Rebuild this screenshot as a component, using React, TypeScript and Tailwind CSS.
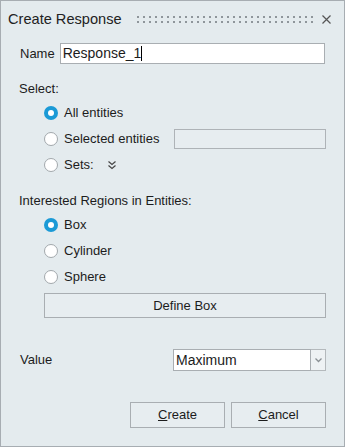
import React from "react";

function Radio({ checked, label }: { checked?: boolean; label: string }) {
  return (
    <div className="flex items-center h-[26px] pl-[43px]">
      {checked ? (
        <span className="w-[14px] h-[14px] rounded-full bg-[#1b9ad6] flex items-center justify-center">
          <span className="w-[6px] h-[6px] rounded-full bg-white" />
        </span>
      ) : (
        <span className="w-[14px] h-[14px] rounded-full bg-white border border-[#a2a8ac]" />
      )}
      <span className="ml-[6px]">{label}</span>
    </div>
  );
}

function Grip() {
  return (
    <svg width="178" height="8" className="block">
      <defs>
        <pattern id="dots" width="6" height="5" patternUnits="userSpaceOnUse">
          <rect x="0" y="0" width="2" height="2" fill="#8f969b" />
        </pattern>
      </defs>
      <rect x="0" y="0" width="178" height="7" fill="url(#dots)" />
    </svg>
  );
}

export default function App() {
  return (
    <div
      className="w-[345px] h-[447px] bg-[#e4ebee] border border-[#a7adb2] text-[13px] text-[#1c1c1c] flex flex-col"
      style={{ fontFamily: '"Liberation Sans", Arial, sans-serif' }}
    >
      <div className="flex items-center h-[37px] pl-[7px]">
        <span className="text-[14.6px] text-[#222]">Create Response</span>
        <span className="ml-[15px] mt-[1px]">
          <Grip />
        </span>
        <svg width="9" height="9" viewBox="0 0 9 9" className="ml-[7px]">
          <path d="M0.5 0.5 L8.5 8.5 M8.5 0.5 L0.5 8.5" stroke="#555" strokeWidth="1.2" />
        </svg>
      </div>

      <div className="flex items-center h-[21px] mt-[5px] pl-[19px]">
        <span>Name</span>
        <div className="ml-[5px] w-[265px] h-[21px] bg-white border border-[#a9aeb2] flex items-center px-[2px]">
          <span className="text-[14px]">Response_1</span>
          <span className="w-[1px] h-[15px] bg-black" />
        </div>
      </div>

      <div className="h-[16px] leading-[16px] mt-[17px] pl-[18px]">Select:</div>
      <div className="mt-[3px]">
        <Radio checked label="All entities" />
        <div className="flex items-center">
          <Radio label="Selected entities" />
          <div className="ml-auto mr-[18px] w-[152px] h-[20px] bg-[#e7edf0] border border-[#aeb3b7]" />
        </div>
        <div className="flex items-center">
          <Radio label="Sets:" />
          <svg width="10" height="10" viewBox="0 0 10 10" className="ml-[13px]">
            <path d="M1.5 1.5 L5 4.5 L8.5 1.5 M1.5 5.5 L5 8.5 L8.5 5.5" fill="none" stroke="#444" strokeWidth="1.2" />
          </svg>
        </div>
      </div>

      <div className="h-[16px] leading-[16px] mt-[15px] pl-[18px]">Interested Regions in Entities:</div>
      <div className="mt-[3px]">
        <Radio checked label="Box" />
        <Radio label="Cylinder" />
        <Radio label="Sphere" />
      </div>
      <div className="mt-[3px] ml-[43px] mr-[18px] h-[25px] border border-[#a9aeb2] bg-[#e7edf0] flex items-center justify-center">
        Define Box
      </div>

      <div className="flex items-center mt-[31px] pl-[19px] pr-[18px] h-[22px]">
        <span>Value</span>
        <div className="ml-auto w-[153px] h-[22px] flex">
          <div className="flex-1 bg-white border border-[#a9aeb2] flex items-center px-[2px] text-[14px]">Maximum</div>
          <div className="w-[15px] border border-l-0 border-[#b4b9bc] bg-[#eef2f4] flex items-center justify-center">
            <svg width="7" height="5" viewBox="0 0 7 5">
              <path d="M0.5 0.5 L3.5 3.5 L6.5 0.5" fill="none" stroke="#8a9094" strokeWidth="1.3" />
            </svg>
          </div>
        </div>
      </div>

      <div className="flex justify-end gap-[6px] mt-[31px] pr-[18px]">
        <div className="w-[95px] h-[26px] border border-[#a9aeb2] bg-[#e7edf0] flex items-center justify-center">
          <span><span className="underline">C</span>reate</span>
        </div>
        <div className="w-[95px] h-[26px] border border-[#a9aeb2] bg-[#e7edf0] flex items-center justify-center">
          <span><span className="underline">C</span>ancel</span>
        </div>
      </div>
    </div>
  );
}
